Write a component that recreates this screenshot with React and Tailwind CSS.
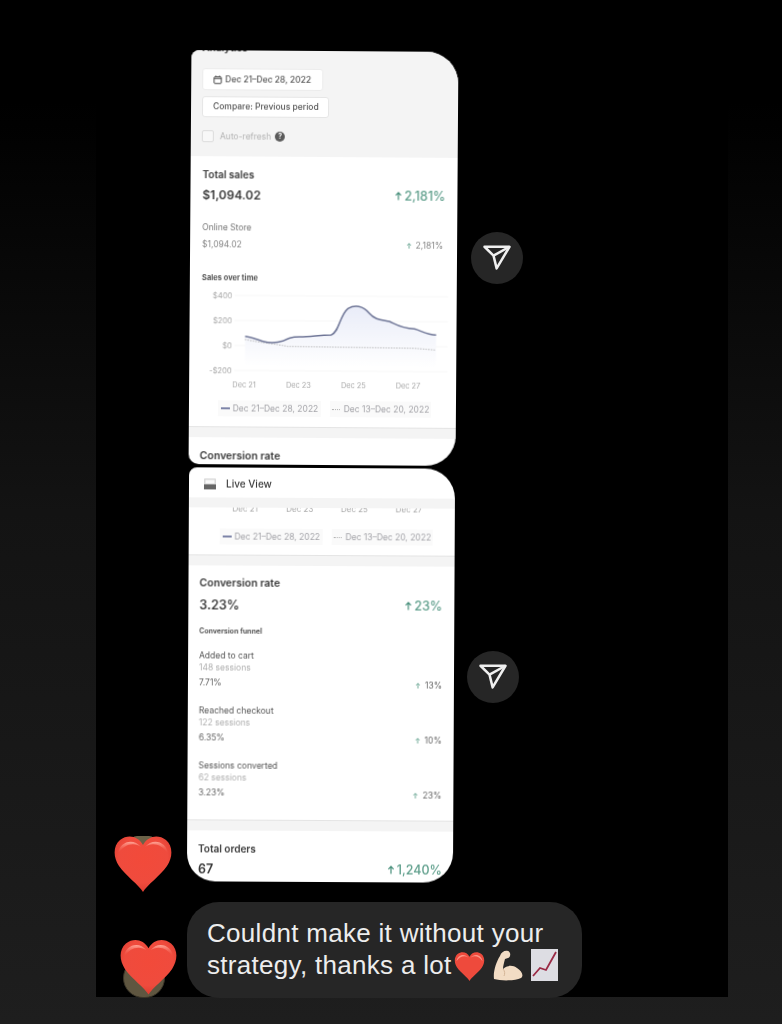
import React from "react";

const HEART = "M29 56 C25 49 12 40 5 30 C-1 21 -1 10 6 4 C14 -2 24 0 29 9 C34 0 44 -2 52 4 C59 10 59 21 53 30 C46 40 33 49 29 56 Z";

const Heart = ({ className, id }) => (
  <svg viewBox="0 0 58 56" className={className}>
    <defs>
      <radialGradient id={id} cx="50%" cy="40%" r="62%">
        <stop offset="0%" stopColor="#f24a3a" />
        <stop offset="70%" stopColor="#ef4b3d" />
        <stop offset="100%" stopColor="#dc3c30" />
      </radialGradient>
      <linearGradient id={id + "h"} x1="0" y1="0" x2="0" y2="1">
        <stop offset="0%" stopColor="#ffa99b" stopOpacity="0.95" />
        <stop offset="100%" stopColor="#f0483a" stopOpacity="0" />
      </linearGradient>
    </defs>
    <path d={HEART} fill={`url(#${id})`} />
    <path d="M4 18 C5 6 19 1 27 11 C20 6 10 8 4 18 Z M31 11 C39 1 53 6 54 18 C48 8 38 6 31 11 Z" fill={`url(#${id}h)`} />
  </svg>
);

const Send = () => (
  <div className="w-[52px] h-[52px] rounded-full bg-[#262626] flex items-center justify-center shrink-0">
    <svg width="30" height="30" viewBox="0 0 24 24" fill="none" stroke="#f0f0f0" strokeWidth="2" strokeLinejoin="round" className="blur-[0.4px]">
      <path d="M22 3 L9.218 10.083" />
      <path d="M11.698 20.334 L22 3 H2 L9.218 10.084 Z" />
    </svg>
  </div>
);

const Up = ({ size, color }) => (
  <svg width={size} height={size * 1.15} viewBox="0 0 10 12" fill="none" stroke={color} strokeWidth="1.5" className="shrink-0">
    <path d="M5 11 V2 M1.6 5 L5 1.5 L8.4 5" />
  </svg>
);

const Band = ({ className }) => <div className={`h-[11px] bg-[#f4f4f4] border-t border-[#e4e4e4] ${className}`} />;

const Legend = ({ className, a, b }) => (
  <div className={`flex gap-[9px] text-[8.5px] text-[#a3a3a8] leading-[16px] ${className}`}>
    <div className="w-[103px] h-[16px] bg-[#fafafa] flex items-center justify-center gap-[3px]">
      <span className="w-[9px] h-[1.5px] bg-[#7d84a8]" />
      <span>{a}</span>
    </div>
    <div className="w-[101px] h-[16px] bg-[#fafafa] flex items-center justify-center gap-[4px]">
      <span className="w-[8px] border-t border-dotted border-[#b0b0b0]" />
      <span>{b}</span>
    </div>
  </div>
);

const Chart = () => (
  <svg width="267" height="105" viewBox="15 75 801 315" className="block mt-[1px]" fontFamily="Inter, sans-serif">
    <defs>
      <linearGradient id="area" x1="0" y1="0" x2="0" y2="1">
        <stop offset="0%" stopColor="#e9ecf8" />
        <stop offset="100%" stopColor="#ffffff" />
      </linearGradient>
    </defs>
    {[108, 183, 258, 333].map((y) => (
      <path key={y} d={`M150 ${y} H790`} stroke="#f3f3f3" strokeWidth="2" />
    ))}
    {[["$400", 108], ["$200", 183], ["$0", 258], ["-$200", 333]].map(([t, y]) => (
      <text key={t} x="143" y={y + 8} textAnchor="end" fontSize="23" fill="#a8a8a8">{t}</text>
    ))}
    {[["Dec 21", 180], ["Dec 23", 343], ["Dec 25", 508], ["Dec 27", 672]].map(([t, x]) => (
      <text key={t} x={x} y="384" textAnchor="middle" fontSize="22" fill="#a8a8a8">{t}</text>
    ))}
    <path d="M182 231 C200 232 215 240 235 245 C255 250 275 250 295 244 C310 236 320 231 345 231 C380 231 400 226 440 225 C465 215 465 165 490 145 C510 133 535 135 555 160 C570 178 590 178 615 183 C635 192 650 203 690 205 C710 210 725 222 755 223 L755 320 L182 320 Z" fill="url(#area)" />
    <path d="M182 240 C230 250 270 252 310 260 L690 263 L755 268" fill="none" stroke="#8a8a8a" strokeWidth="2.5" strokeDasharray="3 5" />
    <path d="M182 231 C200 232 215 240 235 245 C255 250 275 250 295 244 C310 236 320 231 345 231 C380 231 400 226 440 225 C465 215 465 165 490 145 C510 133 535 135 555 160 C570 178 590 178 615 183 C635 192 650 203 690 205 C710 210 725 222 755 223" fill="none" stroke="#6f7697" strokeWidth="4.5" />
  </svg>
);

const Funnel = ({ name, sessions, pct, delta, className }) => (
  <div className={className}>
    <div className="text-[8.5px] leading-[12px] text-[#555]">{name}</div>
    <div className="text-[8.5px] leading-[12px] text-[#b0b0b0]">{sessions}</div>
    <div className="flex justify-between items-end mt-[3px] pr-[1px]">
      <span className="text-[8.5px] leading-[12px] text-[#666]">{pct}</span>
      <span className="flex items-center gap-[4px] text-[8.5px] leading-[12px] text-[#666] -mb-[2px]">
        <Up size={6} color="#5e9e8b" />{delta}
      </span>
    </div>
  </div>
);

function Card1() {
  return (
    <div className="w-[267px] h-[414px] shrink-0 bg-white overflow-hidden rounded-tl-[8px] rounded-tr-[32px] rounded-bl-[10px] rounded-br-[30px] rotate-[0.4deg] text-[#3a3a3a] blur-[0.35px]">
      <div className="h-[106px] bg-[#f4f4f4] pl-[11px] flow-root">
        <div className="-mt-[8px] h-[26px] text-[10px] leading-[10px] font-semibold">Analytics</div>
        <div className="w-[121px] h-[22px] bg-white rounded-[3px] border border-[#ececec] flex items-center pl-[10px] gap-[3px] text-[8.5px] font-medium text-[#555]">
          <svg width="9" height="9" viewBox="0 0 10 10" fill="none" stroke="#444" strokeWidth="1.1"><rect x="1" y="1.8" width="8" height="7.4" rx="1" /><path d="M1 3.6 H9 M3 .5 V2 M7 .5 V2" /></svg>
          Dec 21–Dec 28, 2022
        </div>
        <div className="w-[127px] h-[21px] mt-[6px] bg-white rounded-[3px] border border-[#e6e6e6] flex items-center pl-[10px] text-[8.5px] font-medium text-[#555]">Compare: Previous period</div>
        <div className="flex items-center mt-[13px] text-[8.5px] text-[#b5b5b5]">
          <div className="w-[12px] h-[12px] rounded-[2px] border border-[#dcdcdc] bg-[#f8f8f8]" />
          <span className="ml-[6px]">Auto-refresh</span>
          <span className="ml-[4px] w-[10px] h-[10px] rounded-full bg-[#5a5a5a] text-white text-[7px] leading-[10px] text-center font-bold">?</span>
        </div>
      </div>
      <div className="pt-[11px]">
        <div className="px-[12px]">
          <div className="text-[10px] leading-[14px] font-semibold">Total sales</div>
          <div className="flex justify-between items-center h-[18px] mt-[5px]">
            <span className="text-[12px] font-semibold">$1,094.02</span>
            <span className="flex items-center gap-[2px] text-[12.5px] font-medium text-[#5f9f8c]"><Up size={8} color="#3f8a75" />2,181%</span>
          </div>
          <div className="text-[8.5px] leading-[12px] mt-[17px] text-[#777]">Online Store</div>
          <div className="flex justify-between items-center h-[12px] mt-[5px] text-[8.5px] text-[#888]">
            <span>$1,094.02</span>
            <span className="flex items-center gap-[4px] pr-[2px]"><Up size={6} color="#5e9e8b" />2,181%</span>
          </div>
          <div className="text-[7.5px] leading-[10px] mt-[23px] font-bold text-[#555]">Sales over time</div>
        </div>
        <Chart />
        <Legend className="mt-[11px] ml-[29px]" a="Dec 21–Dec 28, 2022" b="Dec 13–Dec 20, 2022" />
        <Band className="mt-[10px]" />
        <div className="px-[11px] mt-[12px] text-[10.5px] leading-[14px] font-semibold">Conversion rate</div>
      </div>
    </div>
  );
}

function Card2() {
  return (
    <div className="w-[266px] h-[414px] shrink-0 bg-white overflow-hidden rounded-tl-[8px] rounded-tr-[30px] rounded-bl-[28px] rounded-br-[30px] rotate-[0.3deg] text-[#3a3a3a] blur-[0.35px]">
      <div className="h-[30px] pt-[3px] flex items-center pl-[15px]">
        <svg width="13" height="12" viewBox="0 0 13 12"><rect x="0" y="0" width="12" height="11" rx="1" fill="#d9d9d9" /><rect x="0" y="6" width="12" height="5" fill="#666" /><rect x="1.5" y="1.5" width="9" height="3.5" fill="#fafafa" /></svg>
        <span className="ml-[9px] text-[10px] font-medium">Live View</span>
      </div>
      <div className="h-[10px] bg-[#f4f4f4]" />
      <div className="h-[8px] overflow-hidden flex ml-[29px] text-[8px] leading-[8px] text-[#a8a8a8]">
        {["Dec 21", "Dec 23", "Dec 25", "Dec 27"].map((d) => (
          <span key={d} className="w-[54.6px] text-center -mt-[3px]">{d}</span>
        ))}
      </div>
      <Legend className="mt-[13px] ml-[31px]" a="Dec 21–Dec 28, 2022" b="Dec 13–Dec 20, 2022" />
      <Band className="mt-[10px]" />
      <div className="px-[11px] pt-[11px]">
        <div className="text-[10.5px] leading-[14px] font-semibold">Conversion rate</div>
        <div className="flex justify-between items-center h-[18px] mt-[6px]">
          <span className="text-[12.5px] font-semibold">3.23%</span>
          <span className="flex items-center gap-[2px] text-[12.5px] font-medium text-[#5f9f8c] pr-[1px]"><Up size={8} color="#3f8a75" />23%</span>
        </div>
        <div className="text-[7px] leading-[10px] mt-[12px] font-bold text-[#555]">Conversion funnel</div>
        <Funnel className="mt-[13px]" name="Added to cart" sessions="148 sessions" pct="7.71%" delta="13%" />
        <Funnel className="mt-[16px]" name="Reached checkout" sessions="122 sessions" pct="6.35%" delta="10%" />
        <Funnel className="mt-[16px]" name="Sessions converted" sessions="62 sessions" pct="3.23%" delta="23%" />
      </div>
      <Band className="mt-[21px]" />
      <div className="px-[11px] pt-[11px]">
        <div className="text-[10px] leading-[14px] font-semibold">Total orders</div>
        <div className="flex justify-between items-center h-[18px] mt-[5px]">
          <span className="text-[12.5px] font-semibold">67</span>
          <span className="flex items-center gap-[2px] text-[12.5px] font-medium text-[#5f9f8c]"><Up size={8} color="#3f8a75" />1,240%</span>
        </div>
      </div>
    </div>
  );
}

export default function App() {
  return (
    <div className="w-full h-[1024px] overflow-hidden bg-[linear-gradient(180deg,#000_10%,#131313_50%,#1e1e1e_100%)]" style={{ fontFamily: "Inter, sans-serif" }}>
      <div className="ml-[96px] w-[632px] h-[997px] bg-black pt-[51px]">
        <div className="flex items-center ml-[94px]">
          <Card1 />
          <div className="ml-[14px]"><Send /></div>
        </div>
        <div className="flex items-center mt-[3px] ml-[18px]">
          <div className="relative w-[74px] h-[414px] shrink-0 flex items-end translate-y-[10px]">
            <div className="absolute left-[16px] bottom-[42px] w-[26px] h-[14px] rounded-full bg-[#6b6248]" />
            <Heart id="h1" className="relative w-[58px] h-[56px]" />
          </div>
          <Card2 />
          <div className="ml-[13px] translate-y-[2px]"><Send /></div>
        </div>
        <div className="flex items-end mt-[20px] ml-[24px]">
          <div className="relative w-[67px] h-[96px] shrink-0">
            <div className="absolute left-[3px] bottom-0 w-[42px] h-[40px] rounded-full bg-[#5f5640] border border-[#3a3528]" />
            <Heart id="h2" className="absolute left-0 top-[37px] w-[57px] h-[56px]" />
          </div>
          <div className="w-[395px] h-[96px] rounded-[32px] bg-[#262626] pl-[20px] pt-[15px] text-[#ededed] text-[26px] leading-[32px] tracking-[0.3px] whitespace-nowrap" style={{ fontFamily: '"Liberation Sans", sans-serif' }}>
            <div>Couldnt make it without your</div>
            <div className="flex items-center h-[32px]">
              <span>strategy, thanks a lot</span>
              <svg viewBox="0 0 58 56" width="31" height="29" className="ml-[2px] mt-[3px]">
                <path d={HEART} fill="#ee4a3c" />
                <path d="M4 18 C5 6 19 1 27 11 C20 6 10 8 4 18 Z M31 11 C39 1 53 6 54 18 C48 8 38 6 31 11 Z" fill="#ffa99b" opacity="0.8" />
              </svg>
              <svg viewBox="0 0 30 31" width="30" height="31" className="ml-[8px]">
                <path d="M1 29 C0 22 3 12 7 6 C8 2 12 0 15 1 C18 2 18 7 15 8 L12 9 C11 13 10 16 10 19 C14 15 20 15 24 18 C29 21 31 26 28 28 C22 31 8 31 1 29 Z" fill="#f2dcc4" />
                <path d="M10 19 C12 21 12 24 11 26" stroke="#d4b597" strokeWidth="1" fill="none" />
              </svg>
              <svg viewBox="0 0 27 32" width="27" height="32" className="ml-[8px]">
                <rect x="0" y="0" width="27" height="32" fill="#dddde3" />
                <path d="M2 27 L9 19 L15 21 L25 3" stroke="#9a2a45" strokeWidth="1.8" fill="none" />
              </svg>
            </div>
          </div>
        </div>
      </div>
    </div>
  );
}
